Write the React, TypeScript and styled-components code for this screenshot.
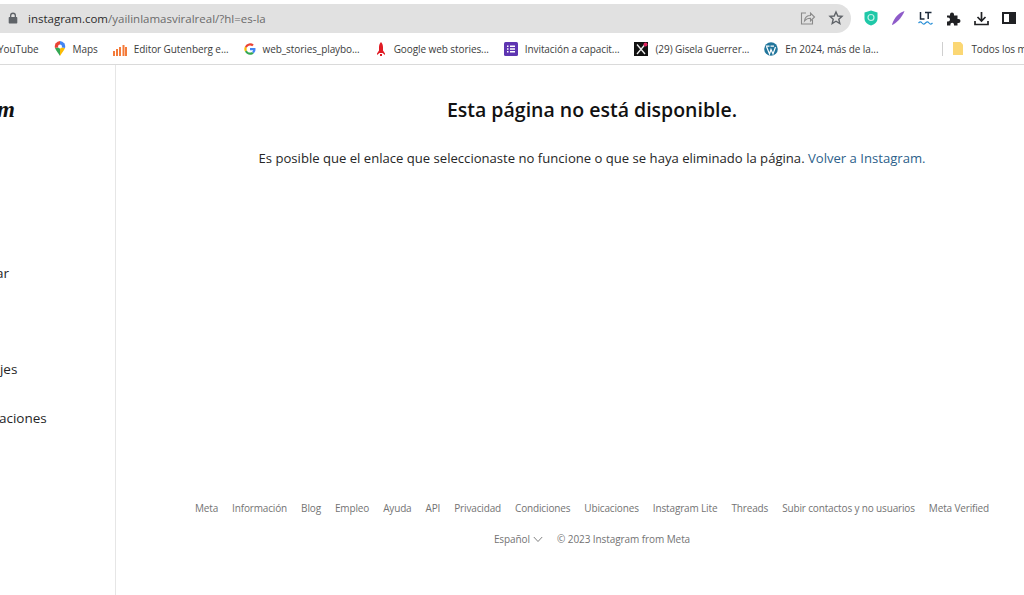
import * as React from "react"
import styled, { createGlobalStyle } from "styled-components"

const GlobalStyle = createGlobalStyle`
html, body {
    margin: 0;
    padding: 0;
    height: 100%;
    overflow: hidden;
    background: #fff;
}
#root {
    height: 100%;
}
`

const Page = styled("div")`
display: flex;
flex-direction: column;
width: 1024px;
height: 595px;
overflow: hidden;
font-family: "Open Sans", "Noto Sans", sans-serif;
`

const TopBar = styled("div")`
display: flex;
align-items: center;
height: 33px;
flex-shrink: 0;
padding-top: 3px;
box-sizing: border-box;
`

const Omnibox = styled("div")`
display: flex;
align-items: center;
width: 851px;
height: 29px;
flex-shrink: 0;
padding: 0 7px;
box-sizing: border-box;
background: #e1e1e1;
border-radius: 0 15px 15px 0;
`

const Url = styled("span")`
flex-grow: 1;
margin-left: 9px;
font-size: 11.5px;
color: #6b6b6b;
`

const Host = styled("span")`
color: #2b2b2b;
`

const BoxIcons = styled("div")`
display: flex;
align-items: center;
gap: 12px;
`

const Extensions = styled("div")`
display: flex;
align-items: center;
gap: 13px;
margin-left: 13px;
`

const BookmarkBar = styled("div")`
display: flex;
align-items: center;
gap: 15px;
height: 32px;
flex-shrink: 0;
box-sizing: border-box;
border-bottom: 1px solid #dadada;
white-space: nowrap;
overflow: hidden;
`

const Bookmark = styled("div")`
display: flex;
align-items: center;
gap: 7px;
flex-shrink: 0;
font-size: 10px;
letter-spacing: -0.08px;
color: #3c3c3c;
`

const FirstBookmark = styled(Bookmark)`
margin-left: -2px;
`

const Divider = styled("div")`
width: 1px;
height: 14px;
flex-shrink: 0;
margin: 0 -6px 0 49px;
background: #cfcfcf;
`

const Body = styled("div")`
display: flex;
flex-grow: 1;
min-height: 0;
`

const Sidebar = styled("nav")`
display: flex;
flex-direction: column;
width: 116px;
flex-shrink: 0;
box-sizing: border-box;
border-right: 1px solid #e6e6e6;
overflow: hidden;
`

const Logo = styled("div")`
margin: 32px 0 0 -3px;
height: 26px;
line-height: 26px;
font-family: "Liberation Serif", serif;
font-style: italic;
font-weight: bold;
font-size: 23px;
color: #111;
`

const SideItem = styled("div")<{ $top: number; $shift: number }>`
margin-top: ${p => p.$top}px;
margin-left: ${p => p.$shift}px;
height: 20px;
line-height: 20px;
font-size: 13.5px;
color: #262626;
white-space: nowrap;
`

const Main = styled("main")`
display: flex;
flex-direction: column;
align-items: center;
width: 952px;
flex-shrink: 0;
`

const Title = styled("h2")`
margin: 30px 0 0;
height: 30px;
line-height: 30px;
font-size: 19.500px;
font-weight: 600;
color: #111;
`

const Message = styled("p")`
margin: 23px 0 0;
height: 20px;
line-height: 20px;
font-size: 13.100px;
color: #262626;
white-space: nowrap;
`

const BackLink = styled("a")`
color: #2d5f8b;
text-decoration: none;
`

const Footer = styled("footer")`
display: flex;
flex-direction: column;
align-items: center;
margin-top: auto;
padding-bottom: 49px;
font-size: 10px;
letter-spacing: -0.15px;
color: #737373;
`

const FooterLinks = styled("div")`
display: flex;
gap: 14px;
white-space: nowrap;
`

const FooterMeta = styled("div")`
display: flex;
align-items: center;
gap: 14px;
margin-top: 17px;
letter-spacing: -0.08px;
`

const Language = styled("span")`
display: flex;
align-items: center;
gap: 3px;
`

const footerLinks = ["Meta", "Información", "Blog", "Empleo", "Ayuda", "API", "Privacidad", "Condiciones", "Ubicaciones", "Instagram Lite", "Threads", "Subir contactos y no usuarios", "Meta Verified"]

const Lock = () => <svg width="12" height="12" viewBox="0 0 12 12"><path fill="#5f6368" d="M3 5V3.600a3 3 0 0 1 6 0V5h.6c.4 0 .7.3.7.7v5c0 .4-.3.7-.7.7H2.400c-.4 0-.7-.3-.7-.7v-5c0-.4.3-.7.7-.7zm1.300 0h3.400V3.600a1.700 1.700 0 0 0-3.400 0z" /></svg>

const Share = () => <svg width="16" height="16" viewBox="0 0 16 16" fill="none" stroke="#8a8a8a" strokeWidth="1.100"><path d="M6 3H1.500v11h11V9.500" /><path d="M4.500 11c.4-3.500 3-5.500 6-5.500V3l4 4-4 4V8.300c-2.500 0-4.500 .8-6 2.700z" /></svg>

const Star = () => <svg width="16" height="16" viewBox="0 0 16 16" fill="none" stroke="#5f6368" strokeWidth="1.400"><path d="M8 2l1.800 4 4.200.4-3.200 2.800 1 4.300L8 11.200l-3.800 2.300 1-4.300L2 6.400 6.200 6z" /></svg>

const Shield = () => <svg width="14" height="16" viewBox="0 0 14 16"><path fill="#1fc8a8" d="M7 .5l6.500 2v6c0 3.500-3 6-6.500 7-3.500-1-6.500-3.500-6.500-7v-6z" /><circle cx="7" cy="7.500" r="3" fill="none" stroke="#bff1e6" strokeWidth="1.200" /></svg>

const Feather = () => <svg width="14" height="16" viewBox="0 0 14 16"><path fill="#8e5bc9" d="M13.500 1C9 2.500 3.500 6.500 1 14.500l.6.500C5 13 11 8 13.500 1z" /></svg>

const LtIcon = () => <svg width="15" height="16" viewBox="0 0 15 16" fill="none"><path stroke="#1d2a3a" strokeWidth="1.500" d="M2.500 2v7h4M7 2.500h6.500M10.200 2.500V9" /><path stroke="#2a8fd6" strokeWidth="1.200" d="M.5 13c1.500-1.500 2.300-1.500 3.500 0s2 1.500 3.500 0 2.300-1.500 3.500 0 2 1.500 3.500 0" /></svg>

const Puzzle = () => <svg width="15" height="15" viewBox="0 0 15 15"><path fill="#202124" d="M1 4.500h3v-1a2 2 0 0 1 4 0v1h3.500V8h1a2 2 0 0 1 0 4h-1v2.500H8v-1a1.800 1.800 0 0 0-3.600 0v1H1V10.500h1a2 2 0 0 0 0-4H1z" /></svg>

const Download = () => <svg width="15" height="15" viewBox="0 0 15 15" fill="none" stroke="#202124" strokeWidth="1.700"><path d="M7.500 1v8.500M3.500 6l4 4 4-4M1 10v3.500h13V10" /></svg>

const PanelIcon = () => <svg width="14" height="14" viewBox="0 0 14 14"><path fill="#202124" fillRule="evenodd" d="M0 1h14v12H0zm2 2v8h5V3z" /></svg>

const MapsPin = () => <svg width="12" height="15" viewBox="0 0 12 15"><path fill="#34a853" d="M6 15C4.500 12 2 10 1 7l5-1z" /><path fill="#fbbc04" d="M6 15c1.500-3 4-5 5-8L6 6z" /><path fill="#4285f4" d="M6 0a5.500 5.500 0 0 1 5 7L6 6z" /><path fill="#ea4335" d="M6 0a5.500 5.500 0 0 0-5 7l5-1z" /><circle cx="6" cy="5.500" r="2" fill="#fff" /></svg>

const Bars = () => <svg width="14" height="14" viewBox="0 0 14 14"><path fill="#f47b3a" d="M0 9h2v5H0zM3 7h2v7H3zM6 5h2v9H6zM9.500 3h2v11h-2zM12 5h2v9h-2z" /></svg>

const GoogleG = () => <svg width="12" height="12" viewBox="0 0 48 48"><path fill="#4285f4" d="M46 24.500c0-1.600-.1-3.100-.4-4.500H24v8.500h12.400c-.5 2.900-2.100 5.300-4.600 7l7.100 5.500c4.200-3.900 7.100-9.600 7.100-16.500z" /><path fill="#34a853" d="M24 47c6.200 0 11.400-2 15-5.500L31.900 36c-2 1.300-4.500 2.100-7.900 2.100-6 0-11.100-4-12.900-9.500l-7.300 5.700C7.500 41.800 15.200 47 24 47z" /><path fill="#fbbc05" d="M11.100 28.600a14 14 0 0 1 0-9.200l-7.300-5.700a23 23 0 0 0 0 20.600z" /><path fill="#ea4335" d="M24 10c3.400 0 6.400 1.200 8.800 3.400L39.200 7A23 23 0 0 0 3.800 13.700l7.300 5.700C12.900 14 18 10 24 10z" /></svg>

const Rocket = () => <svg width="12" height="14" viewBox="0 0 12 14"><path fill="#e01b24" d="M6 0c1.500 1.500 2 3.500 2 5.500v3l2 3v1.500L7.500 11h-3L2 13v-1.500l2-3v-3C4 3.500 4.500 1.500 6 0z" /><path fill="#e01b24" d="M5 12h2v2H5z" /></svg>

const Forms = () => <svg width="14" height="14" viewBox="0 0 14 14"><rect width="14" height="14" rx="1.500" fill="#5e35b1" /><path fill="#fff" d="M3 3.500h1.500V5H3zM6 3.500h5V5H6zM3 6.300h1.500v1.500H3zM6 6.300h5v1.500H6zM3 9.100h1.500v1.500H3zM6 9.100h5v1.500H6z" /></svg>

const XIcon = () => <svg width="14" height="14" viewBox="0 0 14 14"><rect width="14" height="14" fill="#111" /><path stroke="#eee" strokeWidth="1.300" d="M3 2.500l8 9.500M11 2.500L3 12" /><circle cx="11.500" cy="2.500" r="2" fill="#e0245e" /></svg>

const WordPress = () => <svg width="14" height="14" viewBox="0 0 14 14"><circle cx="7" cy="7" r="6.800" fill="#21759b" /><path stroke="#fff" strokeWidth="1.200" fill="none" d="M2.500 4.500L5.500 12 7 7.500 9 12l2.500-7" /><path stroke="#fff" strokeWidth="1.200" d="M2 4.200h3.500M6.500 4.200h3.500" /></svg>

const Folder = () => <svg width="12" height="15" viewBox="0 0 12 15"><path fill="#fbd774" d="M1 1h7.500L11 3.500V14H1z" /></svg>

const Chevron = () => <svg width="10" height="7" viewBox="0 0 10 7" fill="none" stroke="#737373" strokeWidth="0.900"><path d="M.8 1l4.200 4.500L9.200 1" /></svg>

const bookmarks: [React.ReactNode, string][] = [
    [<MapsPin />, "Maps"],
    [<Bars />, "Editor Gutenberg e..."],
    [<GoogleG />, "web_stories_playbo..."],
    [<Rocket />, "Google web stories..."],
    [<Forms />, "Invitación a capacit..."],
    [<XIcon />, "(29) Gisela Guerrer..."],
    [<WordPress />, "En 2024, más de la..."],
]

export default function App() {
    return <>
        <GlobalStyle />
        <Page>
            <TopBar>
                <Omnibox>
                    <Lock />
                    <Url><Host>instagram.com</Host>/yailinlamasviralreal/?hl=es-la</Url>
                    <BoxIcons>
                        <Share />
                        <Star />
                    </BoxIcons>
                </Omnibox>
                <Extensions>
                    <Shield />
                    <Feather />
                    <LtIcon />
                    <Puzzle />
                    <Download />
                    <PanelIcon />
                </Extensions>
            </TopBar>
            <BookmarkBar>
                <FirstBookmark>YouTube</FirstBookmark>
                {bookmarks.map(([icon, label]) => <Bookmark key={label}>{icon}{label}</Bookmark>)}
                <Divider />
                <Bookmark><Folder />Todos los marcadores</Bookmark>
            </BookmarkBar>
            <Body>
                <Sidebar>
                    <Logo>m</Logo>
                    <SideItem $top={140} $shift={-34}>Buscar</SideItem>
                    <SideItem $top={76} $shift={-42}>Mensajes</SideItem>
                    <SideItem $top={29} $shift={-42}>Notificaciones</SideItem>
                </Sidebar>
                <Main>
                    <Title>Esta página no está disponible.</Title>
                    <Message>Es posible que el enlace que seleccionaste no funcione o que se haya eliminado la página. <BackLink href="#">Volver a Instagram.</BackLink></Message>
                    <Footer>
                        <FooterLinks>
                            {footerLinks.map(link => <span key={link}>{link}</span>)}
                        </FooterLinks>
                        <FooterMeta>
                            <Language>Español <Chevron /></Language>
                            <span>© 2023 Instagram from Meta</span>
                        </FooterMeta>
                    </Footer>
                </Main>
            </Body>
        </Page>
    </>
}
